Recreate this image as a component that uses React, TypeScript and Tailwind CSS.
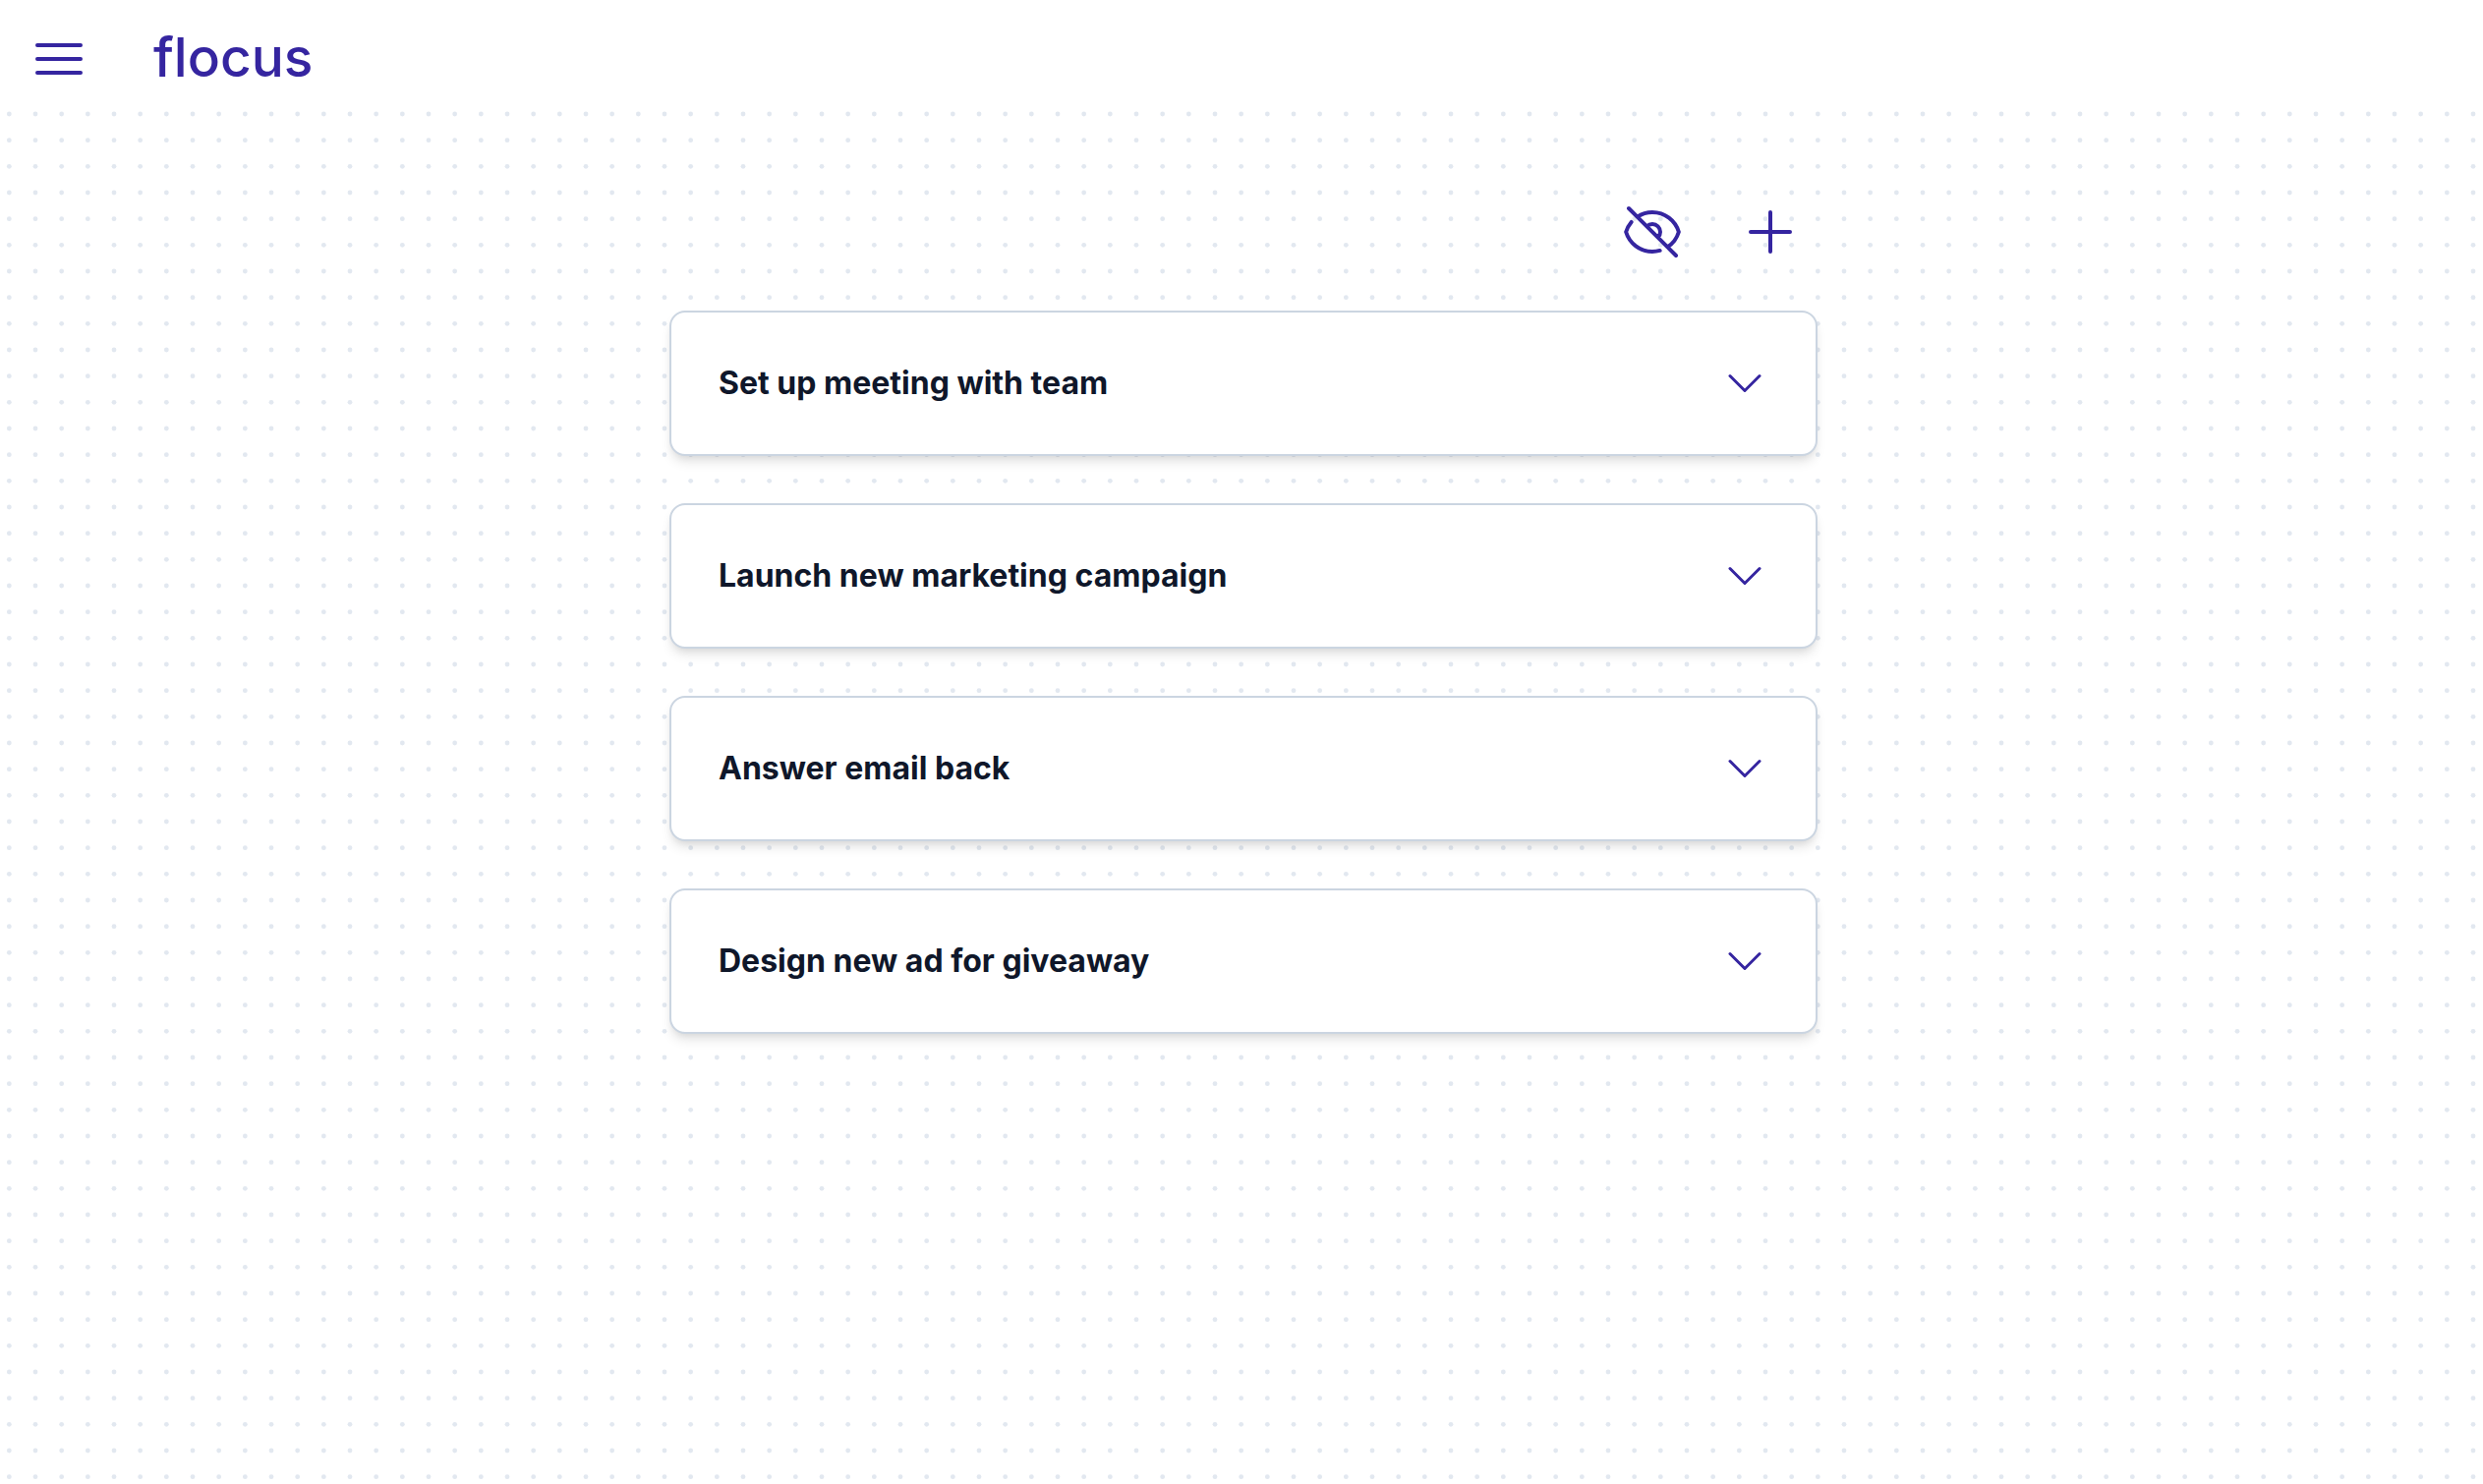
import type { ReactNode } from "react";

const TASKS = [
  "Set up meeting with team",
  "Launch new marketing campaign",
  "Answer email back",
  "Design new ad for giveaway",
];

function Icon({ className, children }: { className: string; children: ReactNode }) {
  return (
    <svg
      viewBox="0 0 24 24"
      fill="none"
      stroke="currentColor"
      strokeWidth={1.5}
      strokeLinecap="round"
      strokeLinejoin="round"
      className={className}
      aria-hidden
    >
      {children}
    </svg>
  );
}

// 80px tile with a 3x3 grid of dots
function DotGrid() {
  const steps = [0, 1, 2];
  return (
    <svg className="absolute inset-0 -z-10 size-full" aria-hidden>
      <defs>
        <pattern id="dots" x="-4" y="-4" width="80" height="80" patternUnits="userSpaceOnUse">
          {steps.map((row) =>
            steps.map((col) => (
              <circle
                key={`${row}-${col}`}
                cx={((col + 0.5) * 80) / 3}
                cy={((row + 0.5) * 80) / 3}
                r="2.4"
                fill="#e2e8f0"
              />
            )),
          )}
        </pattern>
      </defs>
      <rect width="100%" height="100%" fill="url(#dots)" />
    </svg>
  );
}

function TaskCard({ title }: { title: string }) {
  return (
    <li className="flex items-center justify-between rounded-2xl border-2 border-[#cbd5e1] bg-white p-12 shadow-[0_8px_12px_-2px_rgb(0_0_0/0.1),0_4px_8px_-4px_rgb(0_0_0/0.1)]">
      <h2 className="text-[32px] leading-12 font-bold text-[#0f172a]">{title}</h2>
      <button type="button" aria-label={`Expand ${title}`}>
        <Icon className="size-12">
          <path d="M19.5 8.25l-7.5 7.5-7.5-7.5" />
        </Icon>
      </button>
    </li>
  );
}

export default function App() {
  return (
    <div className="relative isolate flex min-h-screen flex-col bg-white font-['Inter',sans-serif] text-[#3525a0]">
      <DotGrid />
      <header className="flex h-28 items-center gap-16 bg-white px-7 pt-2">
        <button type="button" aria-label="Open menu">
          <Icon className="size-16">
            <path d="M3.75 6.75h16.5M3.75 12h16.5m-16.5 5.25h16.5" />
          </Icon>
        </button>
        <a href="#" className="pb-1 text-[55px] leading-16 font-medium">
          flocus
        </a>
      </header>

      <main className="pl-1">
        <div className="mx-auto flex max-w-[1168px] flex-col gap-12 pt-[92px]">
          <div className="flex justify-end gap-14 pr-4">
            <button type="button" aria-label="Hide completed tasks">
              <Icon className="size-16">
                <path d="M3.98 8.223A10.477 10.477 0 0 0 1.934 12C3.226 16.338 7.244 19.5 12 19.5c.993 0 1.953-.138 2.863-.395M6.228 6.228A10.451 10.451 0 0 1 12 4.5c4.756 0 8.773 3.162 10.065 7.498a10.522 10.522 0 0 1-4.293 5.774M6.228 6.228 3 3m3.228 3.228 3.65 3.65m7.894 7.894L21 21m-3.228-3.228-3.65-3.65m0 0a3 3 0 1 0-4.243-4.243m4.242 4.242L9.88 9.88" />
              </Icon>
            </button>
            <button type="button" aria-label="Add task">
              <Icon className="size-16">
                <path d="M12 4.5v15m7.5-7.5h-15" />
              </Icon>
            </button>
          </div>
          <ul className="flex flex-col gap-12">
            {TASKS.map((title) => (
              <TaskCard key={title} title={title} />
            ))}
          </ul>
        </div>
      </main>
    </div>
  );
}
